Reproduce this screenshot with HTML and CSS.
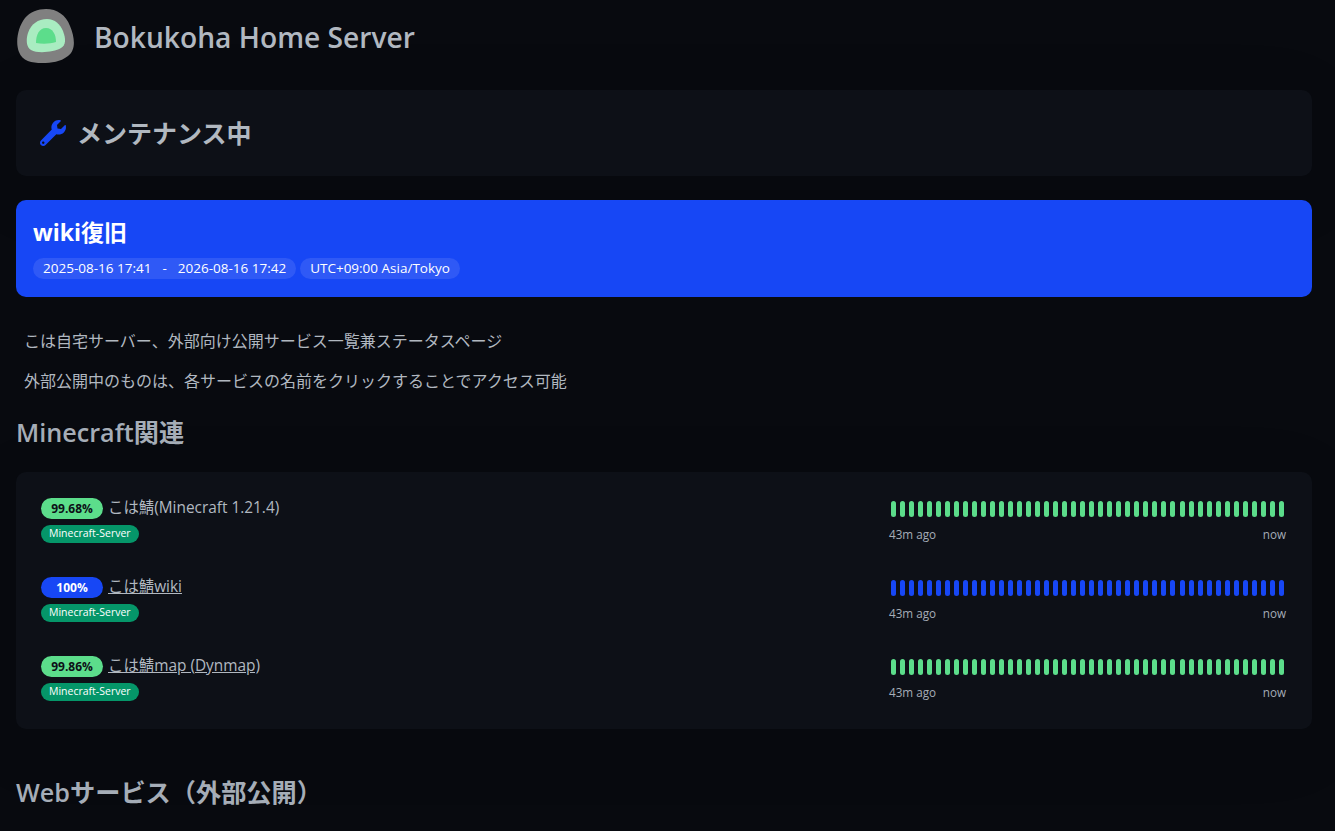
FILE: index.html
```html
<!DOCTYPE html>
<html lang="ja">
<head>
<meta charset="utf-8">
<title>Bokukoha Home Server</title>
<link rel="stylesheet" href="styles.css">
</head>
<body>
<div class="page">
  <header class="site-head">
    <svg class="logo" viewBox="0 0 60 54" aria-hidden="true">
      <path fill="#808080" d="M30 0C41 0 50 6 54 17C59 29 60 41 52 47C44 53 36 54 26 54C16 54 6 52 3 43C-1 33 2 18 9 9C14 3 22 0 30 0Z"/>
      <path fill="#a9ecc1" d="M31 10C39 10 44 15 47 22C50 30 50 36 45 39C38 43 22 45 15 41C10 38 10 30 12 24C15 15 22 10 31 10Z"/>
      <path fill="#5cdd8b" d="M30 19C37 19 40 26 40 33C34 35 26 35 20 34C20 26 23 19 30 19Z"/>
    </svg>
    <h1 class="site-title">Bokukoha Home Server</h1>
  </header>

  <section class="card status-card">
    <svg class="wrench" viewBox="0 0 512 512" aria-hidden="true"><path fill="#1747f5" d="M507.7 109.1c-2.2-9-13.5-12.1-20.1-5.500l-74.400 74.400-67.900-11.300-11.300-67.900 74.400-74.400c6.600-6.600 3.400-17.900-5.700-20.200-47.400-11.700-99.600 1-136.600 38-39.600 39.600-51 97-34.500 146.800L18.700 402.900c-25 25-25 65.500 0 90.500s65.500 25 90.500 0l213.100-213.100c49.800 16.600 107.200 5 147-34.800 37-37 49.700-89.300 38.400-136.400zM64 472c-13.300 0-24-10.700-24-24 0-13.300 10.700-24 24-24s24 10.700 24 24c0 13.300-10.700 24-24 24z"/></svg>
    <h2 class="status-text">メンテナンス中</h2>
  </section>

  <section class="maintenance">
    <h3 class="maint-title">wiki復旧</h3>
    <div class="maint-pills">
      <span class="pill">2025-08-16 17:41 <span class="sep">&nbsp;-&nbsp;</span> 2026-08-16 17:42</span>
      <span class="pill">UTC+09:00 Asia/Tokyo</span>
    </div>
  </section>

  <div class="intro">
    <p class="intro-line">こは自宅サーバー、外部向け公開サービス一覧兼ステータスページ</p>
    <p class="intro-line">外部公開中のものは、各サービスの名前をクリックすることでアクセス可能</p>
  </div>

  <h2 class="group-title">Minecraft関連</h2>
  <section class="card monitor-list">
    <div class="monitor">
      <div class="monitor-info">
        <div class="monitor-name"><span class="uptime up">99.68%</span><span class="name">こは鯖(Minecraft 1.21.4)</span></div>
        <span class="tag">Minecraft-Server</span>
      </div>
      <div class="beats-col"><div class="beats up" data-beats></div><div class="beat-legend"><span>43m ago</span><span>now</span></div></div>
    </div>
    <div class="monitor">
      <div class="monitor-info">
        <div class="monitor-name"><span class="uptime maint">100%</span><a class="name link" href="#">こは鯖wiki</a></div>
        <span class="tag">Minecraft-Server</span>
      </div>
      <div class="beats-col"><div class="beats maint" data-beats></div><div class="beat-legend"><span>43m ago</span><span>now</span></div></div>
    </div>
    <div class="monitor">
      <div class="monitor-info">
        <div class="monitor-name"><span class="uptime up">99.86%</span><a class="name link" href="#">こは鯖map (Dynmap)</a></div>
        <span class="tag">Minecraft-Server</span>
      </div>
      <div class="beats-col"><div class="beats up" data-beats></div><div class="beat-legend"><span>43m ago</span><span>now</span></div></div>
    </div>
  </section>

  <h2 class="group-title second">Webサービス（外部公開）</h2>
</div>
<script>
document.querySelectorAll('[data-beats]').forEach(function (el) {
  for (var i = 0; i < 44; i++) {
    var b = document.createElement('i');
    b.className = 'beat';
    el.appendChild(b);
  }
});
</script>
</body>
</html>
```
FILE: styles.css
```css
* { box-sizing: border-box; }
html, body { margin: 0; height: 100%; overflow: hidden; }
body {
  background: #080a0f;
  color: #b1b8c0;
  font-family: "Open Sans", "Noto Sans CJK JP", sans-serif;
  font-size: 16px;
}
.page { width: 1312px; padding-left: 16px; }

.site-head { display: flex; align-items: center; height: 54px; margin-top: 9px; }
.logo { width: 60px; height: 54px; flex: none; }
.site-title { margin: 2px 0 0 18px; font-size: 28.2px; font-weight: 600; line-height: 1; color: #b1b8c0; }

.card { background: #0d1017; border-radius: 10px; box-shadow: 0 15px 70px rgba(0, 0, 0, 0.1); }
.status-card { display: flex; align-items: center; height: 86px; margin-top: 27px; padding-left: 24px; }
.wrench { width: 26px; height: 26px; flex: none; }
.status-text { margin: 0 0 0 11px; font-size: 25px; font-weight: 700; line-height: 1; color: #b1b8c0; }

.maintenance { height: 97px; margin-top: 24px; padding: 18px 17px 0; background: #1747f5; border-radius: 10px; color: #fff; }
.maint-title { margin: 0; font-size: 23px; font-weight: 700; line-height: 28px; }
.maint-pills { display: flex; gap: 4px; margin-top: 12px; }
.pill { padding: 0 10px; font-size: 13.5px; line-height: 21px; background: #2f59f6; border-radius: 11px; white-space: nowrap; }
.sep { margin: 0 4px; }

.intro { padding-left: 8px; margin-top: 33px; }
.intro-line { margin: 0 0 18px; font-size: 16px; line-height: 22px; }

.group-title { margin: 0; font-size: 25.2px; font-weight: 600; line-height: 32px; color: #a5adb7; }
.group-title.second { margin-top: 47px; }
.intro + .group-title { margin-top: 24px; }

.monitor-list { height: 257px; margin-top: 24px; padding: 26px 26px 0 25px; }
.monitor { display: flex; justify-content: space-between; height: 79px; }
.monitor-name { display: flex; align-items: center; height: 21px; }
.uptime { width: 62px; font-size: 12px; font-weight: 700; line-height: 21px; text-align: center; border-radius: 11px; }
.uptime.up { background: #5cdd8b; color: #0d1017; }
.uptime.maint { background: #1747f5; color: #fff; }
.name { margin: 0 0 5px 5px; font-size: 15.4px; color: #b1b8c0; }
.link { text-decoration: underline; }
.tag { display: inline-block; margin-top: 6px; padding: 0 8px; font-size: 10.5px; line-height: 17px; height: 18px; color: #fff; background: #059669; border-radius: 9px; }
.monitor-info { display: flex; flex-direction: column; align-items: flex-start; }

.beats-col { width: 397px; }
.beats { display: flex; justify-content: space-between; height: 16px; margin-top: 3px; padding: 0 2px; }
.beat { width: 5px; height: 16px; border-radius: 3px; }
.beats.up .beat { background: #5cdd8b; }
.beats.maint .beat { background: #1747f5; }
.beat-legend { display: flex; justify-content: space-between; margin-top: 10px; font-size: 11.7px; line-height: 14px; color: #a5adb7; }
```
